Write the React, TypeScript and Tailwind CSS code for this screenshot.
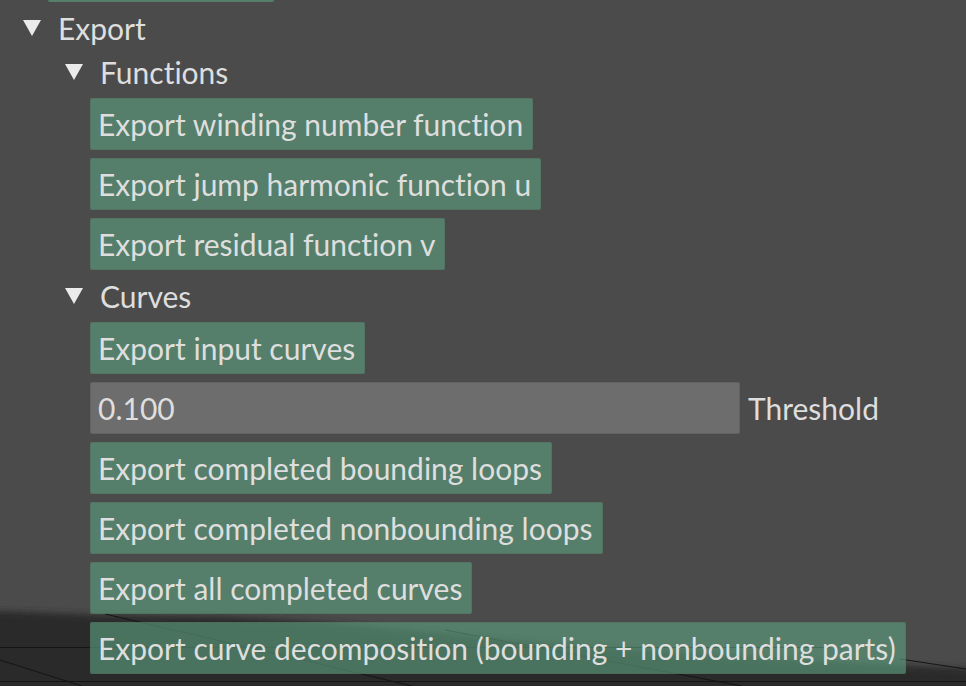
import React from "react";

function Action({ children }: { children: React.ReactNode }) {
  return (
    <button className="h-[52px] whitespace-nowrap rounded-xs border border-[#4b5f55]/30 bg-[#5a9b7b]/65 pr-[9px] pl-[7px] text-left">
      {children}
    </button>
  );
}

function Heading({ children }: { children: React.ReactNode }) {
  return (
    <button className="flex h-11 items-center gap-[17px] text-left">
      <svg width="18" height="16" viewBox="0 0 18 16" fill="#ebebeb" aria-hidden="true">
        <path d="M0 0h18L9 16z" />
      </svg>
      {children}
    </button>
  );
}

function GroundPlane() {
  return (
    <svg
      className="absolute inset-x-0 bottom-0 h-20 w-full"
      viewBox="0 0 966 80"
      preserveAspectRatio="none"
      aria-hidden="true"
    >
      <defs>
        <filter id="horizon" x="-5%" y="-20%" width="110%" height="140%">
          <feGaussianBlur stdDeviation="3" />
        </filter>
      </defs>
      <path
        d="M-20 5L0 5L100 9L230 11L320 16L420 25L520 35L640 44L800 54L890 59L986 63V100H-20z"
        fill="#2a2a2a"
        filter="url(#horizon)"
      />
      <g stroke="#151515" fill="none">
        <path d="M0 41.5H830M0 75.5H966" />
        <path d="M0 54L82 80M105 8L320 58L412 80M445 24L640 61L742 80M900 53L966 63" />
      </g>
    </svg>
  );
}

export default function App() {
  return (
    <main className="relative min-h-screen overflow-hidden bg-[#4b4b4b] font-['Lato',sans-serif] text-[30px] leading-9 text-[#dedede] [font-variant-ligatures:none]">
      <GroundPlane />
      <div className="relative flex flex-col items-start">
        <div className="ml-12 h-0.5 w-[226px] rounded-b-xs bg-[#5a9b7b]/65" />
        <section className="flex flex-col items-start pl-[23px] pt-1">
          <Heading>Export</Heading>
          <div className="flex flex-col items-start pl-[42px]">
            <Heading>Functions</Heading>
            <div className="flex flex-col items-start gap-2 pl-[25px] pt-1">
              <Action>Export winding number function</Action>
              <Action>Export jump harmonic function u</Action>
              <Action>Export residual function v</Action>
            </div>
            <div className="pt-1">
              <Heading>Curves</Heading>
            </div>
            <div className="flex flex-col items-start gap-2 pl-[25px] pt-1">
              <Action>Export input curves</Action>
              <div className="flex items-center gap-2">
                <input
                  id="threshold"
                  defaultValue="0.100"
                  className="h-[52px] w-[650px] rounded-xs border border-[#5c5c5c]/60 bg-[#6d6d6d] px-[7px] outline-none"
                />
                <label htmlFor="threshold">Threshold</label>
              </div>
              <Action>Export completed bounding loops</Action>
              <Action>Export completed nonbounding loops</Action>
              <Action>Export all completed curves</Action>
              <Action>Export curve decomposition (bounding + nonbounding parts)</Action>
            </div>
          </div>
        </section>
      </div>
    </main>
  );
}
